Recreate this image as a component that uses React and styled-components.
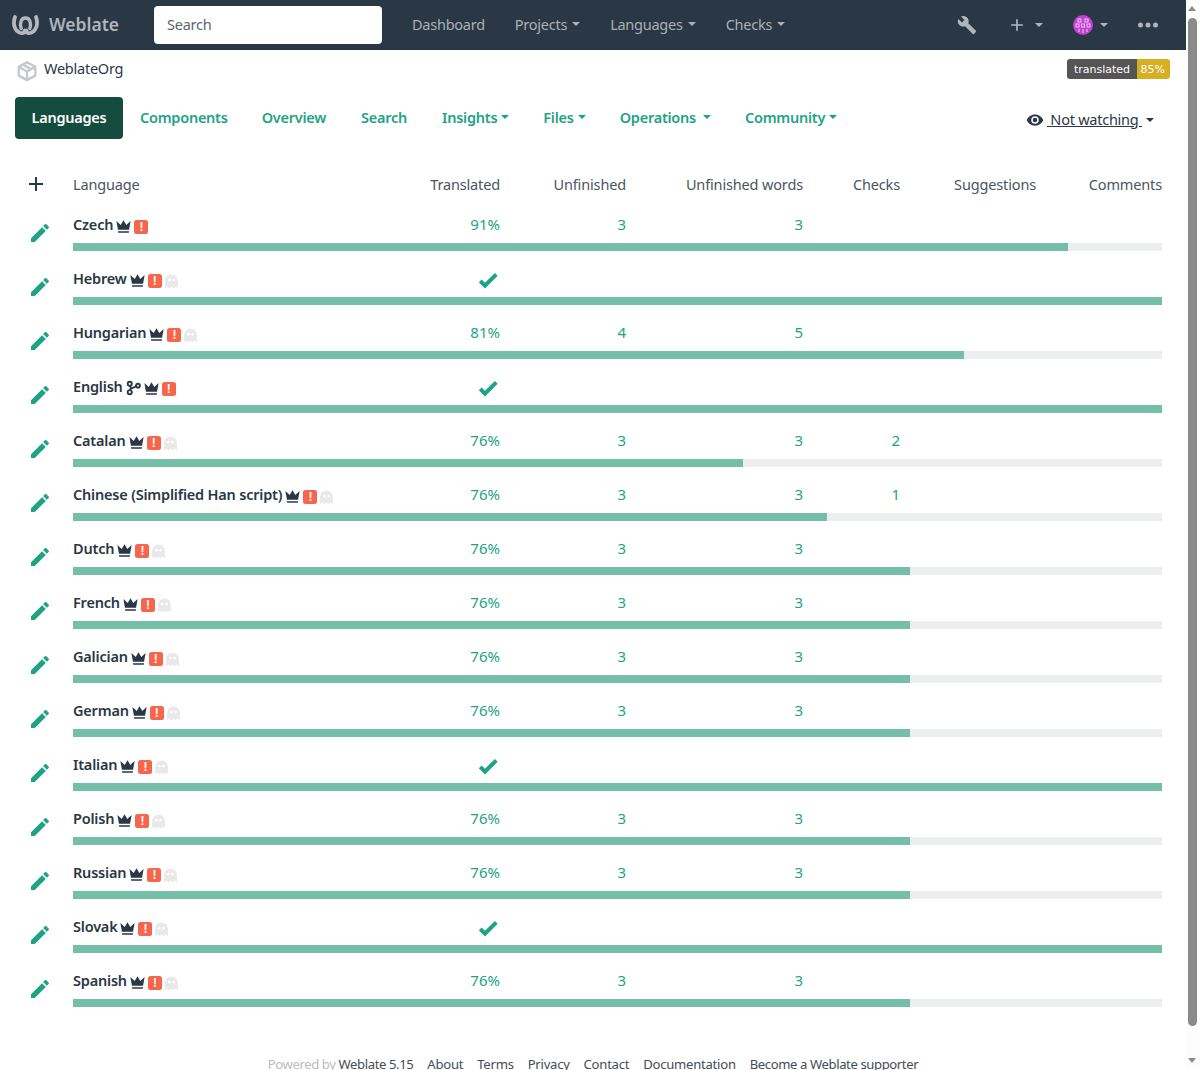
import React from "react";
import styled, { createGlobalStyle } from "styled-components";

const Global = createGlobalStyle`
  html, body { margin: 0; padding: 0; background: #fff; }
  body { font-family: "Noto Sans", "Liberation Sans", sans-serif; color: #2a3744; font-size: 14.5px; letter-spacing: -0.25px; }
  html { overflow: hidden; }
`;

const Page = styled.div`
  width: 1200px;
  height: 1070px;
  overflow: hidden;
  position: relative;
`;
const TopBar = styled.header`
  height: 50px;
  background: #2a3744;
  display: flex;
  align-items: center;
  padding: 0 37px 0 12px;
  color: #b0b6bd;
`;
const Brand = styled.div`
  display: flex;
  align-items: center;
  gap: 10px;
  width: 142px;
  font-size: 17.5px;
  font-weight: 600;
  letter-spacing: 0;
  color: #aeb5bc;
`;
const BrandText = styled.span`
  padding-bottom: 2px;
`;
const SearchBox = styled.div`
  width: 228px;
  height: 38px;
  box-sizing: border-box;
  background: #fff;
  border-radius: 4px;
  padding: 0 0 2px 13px;
  display: flex;
  align-items: center;
  color: #5b6670;
`;
const MainNav = styled.nav`
  display: flex;
  margin-left: 30px;
  gap: 30px;
`;
const NavLink = styled.span`
  display: flex;
  align-items: center;
  gap: 5px;
  color: #aab0b7;
  padding-bottom: 2px;
`;
const Caret = styled.i`
  display: inline-block;
  width: 0;
  height: 0;
  border-left: 4px solid transparent;
  border-right: 4px solid transparent;
  border-top: 4px solid ${(p) => p.$color || "currentColor"};
`;
const TopTools = styled.div`
  margin-left: auto;
  display: flex;
  align-items: center;
  color: #b0b6bd;
`;
const ToolItem = styled.span`
  display: flex;
  align-items: center;
  gap: ${(p) => p.$gap || 0}px;
  margin-left: ${(p) => p.$ml || 0}px;
`;
const Crumb = styled.div`
  height: 47px;
  display: flex;
  align-items: flex-start;
  justify-content: space-between;
  padding: 9px 30px 0 16px;
  box-sizing: border-box;
`;
const OrgName = styled.div`
  display: flex;
  align-items: center;
  gap: 6px;
  line-height: 20px;
  margin-top: -5px;
  svg { margin-top: 6px; }
`;
const Badge = styled.div`
  display: flex;
  height: 20px;
  border-radius: 3px;
  overflow: hidden;
  font-family: "DejaVu Sans", sans-serif;
  font-size: 11px;
  letter-spacing: 0;
  line-height: 21px;
  color: #fff;
`;
const BadgeKey = styled.span`
  background: #555;
  padding: 0 6.5px;
`;
const BadgeVal = styled.span`
  background: #d6af22;
  padding: 0 5px 0 4px;
`;
const Tabs = styled.div`
  display: flex;
  align-items: center;
  height: 42px;
  padding-left: 15px;
  font-weight: 600;
  color: #1fa385;
`;
const ActiveTab = styled.span`
  height: 42px;
  width: 108px;
  box-sizing: border-box;
  padding-bottom: 2px;
  display: flex;
  align-items: center;
  justify-content: center;
  background: #144d3f;
  color: #fff;
  border-radius: 4px;
`;
const Tab = styled.span`
  display: flex;
  align-items: center;
  gap: ${(p) => p.$gap || 4}px;
  margin-left: ${(p) => p.$ml}px;
  padding-bottom: 2px;
`;
const Watch = styled.span`
  margin-left: auto;
  margin-right: 46px;
  margin-top: 3px;
  display: flex;
  align-items: center;
  gap: 5px;
  font-weight: 400;
  color: #2a3744;
`;
const WatchText = styled.span`
  text-decoration: underline;
  white-space: pre;
  margin: 0 -1px 0 -2px;
  padding-bottom: 2px;
`;
const Table = styled.div`
  margin-top: 25px;
  padding-left: 15px;
  width: 1147px;
`;
const Row = styled.div`
  display: grid;
  grid-template-columns: 58px 327px 100px 126px 177px 97px 136px 126px;
  grid-template-rows: 39px 15px;
  height: 54px;
  box-sizing: border-box;
`;
const HeadRow = styled.div`
  display: grid;
  grid-template-columns: 58px 327px 100px 126px 177px 97px 136px 126px;
  height: 40px;
  align-items: center;
  color: #4a5561;
  letter-spacing: -0.15px;
`;
const HeadAction = styled.div`
  display: flex;
  justify-content: center;
  padding-right: 16px;
  color: #2a3744;
`;
const Action = styled.div`
  grid-row: 1 / span 2;
  display: flex;
  align-items: center;
  justify-content: center;
  padding: 4px 8px 0 0;
  color: #1fa385;
`;
const HeadCell = styled.div`
  text-align: ${(p) => (p.$left ? "left" : "right")};
  padding-bottom: 1px;
`;
const Name = styled.div`
  display: flex;
  align-items: center;
  gap: 1px;
  font-weight: 600;
  height: 39px;
  padding-top: 1px;
  box-sizing: border-box;
  letter-spacing: -0.2px;
`;
const Cell = styled.div`
  text-align: right;
  color: #1fa385;
  height: 39px;
  padding-top: 2px;
  line-height: 36px;
  box-sizing: border-box;
  font-size: 15px;
  letter-spacing: 0;
`;
const DoneCell = styled(Cell)`
  display: flex;
  align-items: center;
  justify-content: flex-end;
  padding-top: 5px;
`;
const IconBox = styled.span`
  display: inline-flex;
  margin-top: ${(p) => p.$mt || 4}px;
  margin-left: ${(p) => p.$ml || 0}px;
`;
const Alert = styled.span`
  width: 14px;
  height: 14px;
  border-radius: 2.5px;
  background: #f6664c;
  color: #fff;
  display: inline-flex;
  align-items: center;
  justify-content: center;
  margin-top: 6px;
  font-size: 12px;
  font-weight: 800;
  line-height: 1;
  font-family: "Liberation Sans", sans-serif;
`;
const Track = styled.div`
  grid-column: 2 / span 7;
  height: 8px;
  background: #eceeef;
`;
const Fill = styled.div`
  height: 100%;
  background: #75bfa8;
`;
const Footer = styled.footer`
  display: flex;
  justify-content: center;
  gap: 14px;
  margin-top: 41px;
  padding-right: 14px;
  font-size: 13.1px;
  color: #444e58;
  white-space: nowrap;
`;
const FooterLong = styled.span`
  letter-spacing: -0.4px;
`;
const Muted = styled.span`
  color: #bcbcbc;
`;
const Scroll = styled.div`
  position: absolute;
  top: 0;
  right: 0;
  width: 14px;
  height: 1070px;
  background: #fdfdfd;
`;
const Thumb = styled.div`
  position: absolute;
  left: 2px;
  top: 18px;
  width: 9px;
  height: 1008px;
  border-radius: 5px;
  background: #8a8a8a;
`;
const ArrowUp = styled.i`
  position: absolute;
  left: 2px;
  top: 6px;
  border-left: 4.5px solid transparent;
  border-right: 4.5px solid transparent;
  border-bottom: 5px solid #8a8a8a;
`;
const ArrowDown = styled.i`
  position: absolute;
  left: 2px;
  top: 1058px;
  border-left: 4.5px solid transparent;
  border-right: 4.5px solid transparent;
  border-top: 5px solid #8a8a8a;
`;

const Mdi = ({ d, size = 16, color = "currentColor" }) => (
  <svg width={size} height={size} viewBox="0 0 24 24" fill={color}><path d={d} /></svg>
);
const PENCIL = "M20.71,7.04C21.1,6.65 21.1,6 20.71,5.63L18.37,3.29C18,2.9 17.35,2.9 16.96,3.29L15.12,5.12L18.87,8.87M3,17.25V21H6.75L17.81,9.93L14.06,6.18L3,17.25Z";
const CROWN = "M5 16L3 5L8.5 10L12 4L15.5 10L21 5L19 16H5M19 19C19 19.6 18.6 20 18 20H6C5.4 20 5 19.6 5 19V18H19V19Z";
const CHECK = "M9,20.42L2.79,14.21L5.62,11.38L9,14.77L18.88,4.88L21.71,7.71L9,20.42Z";
const GHOST = "M12,2A9,9 0 0,0 3,11V22L6,19L9,22L12,19L15,22L18,19L21,22V11A9,9 0 0,0 12,2M9,8A2,2 0 0,1 11,10A2,2 0 0,1 9,12A2,2 0 0,1 7,10A2,2 0 0,1 9,8M15,8A2,2 0 0,1 17,10A2,2 0 0,1 15,12A2,2 0 0,1 13,10A2,2 0 0,1 15,8Z";
const EYE = "M12,9A3,3 0 0,0 9,12A3,3 0 0,0 12,15A3,3 0 0,0 15,12A3,3 0 0,0 12,9M12,17A5,5 0 0,1 7,12A5,5 0 0,1 12,7A5,5 0 0,1 17,12A5,5 0 0,1 12,17M12,4.5C7,4.5 2.73,7.61 1,12C2.73,16.39 7,19.5 12,19.5C17,19.5 21.27,16.39 23,12C21.27,7.61 17,4.5 12,4.5Z";
const WRENCH = "M22.7,19L13.6,9.9C14.5,7.6 14,4.9 12.1,3C10.1,1 7.1,0.6 4.7,1.7L9,6L6,9L1.6,4.7C0.4,7.1 0.9,10.1 2.9,12.1C4.8,14 7.5,14.5 9.8,13.6L18.9,22.7C19.3,23.1 19.9,23.1 20.3,22.7L22.6,20.4C23.1,20 23.1,19.3 22.7,19Z";
const PLUS = "M19,13H13V19H11V13H5V11H11V5H13V11H19V13Z";
const DOTS = "M16,12A2,2 0 0,1 18,10A2,2 0 0,1 20,12A2,2 0 0,1 18,14A2,2 0 0,1 16,12M10,12A2,2 0 0,1 12,10A2,2 0 0,1 14,12A2,2 0 0,1 12,14A2,2 0 0,1 10,12M4,12A2,2 0 0,1 6,10A2,2 0 0,1 8,12A2,2 0 0,1 6,14A2,2 0 0,1 4,12Z";

const Logo = () => (
  <svg width="27" height="20" viewBox="0 0 27 20" fill="none" stroke="#b3b8bd" strokeLinecap="round">
    <path d="M3 2C0.8 8 2 15.5 8 17.7C11 18.7 13 17.8 14.5 15.5" strokeWidth="3.8" />
    <path d="M24 2C26.2 8 25 15.5 19 17.7C16 18.7 14 17.8 12.5 15.5" strokeWidth="3.8" />
    <path d="M9.2 13.5C7.5 8.5 9 3 13.5 3C18 3 19.5 8.5 17.8 13.5" strokeWidth="3.4" />
  </svg>
);
const Box = () => (
  <svg width="22" height="22" viewBox="0 0 24 24" fill="none" stroke="#c6c8ca" strokeWidth="2.6" strokeLinejoin="round">
    <path d="M12 2.5L21 7.5V17L12 22L3 17V7.5Z" />
    <path d="M3 7.5L12 12.5L21 7.5M12 12.5V22M7.5 5L16.5 10" />
  </svg>
);
const Branch = () => (
  <svg width="15" height="16" viewBox="0 0 16 16" fill="none" stroke="#2a3744" strokeWidth="2">
    <circle cx="4" cy="3.5" r="2.2" />
    <circle cx="4" cy="12.5" r="2.2" />
    <circle cx="12.8" cy="5.5" r="2" />
    <path d="M4.5 5.7C5.5 8 5.5 8.5 4.5 10.3M5.5 8.2C7.5 8.2 9 7 10.8 6" />
  </svg>
);
const Avatar = () => (
  <svg width="20" height="20" viewBox="0 0 20 20">
    <circle cx="10" cy="10" r="10" fill="#c043d4" />
    <g fill="none" stroke="#eec2f4" strokeWidth="1">
      <rect x="5" y="4" width="3" height="3" />
      <rect x="12" y="4" width="3" height="3" />
      <rect x="3" y="9" width="3" height="3" />
      <rect x="8.5" y="9" width="3" height="3" />
      <rect x="14" y="9" width="3" height="3" />
      <path d="M6 14v3M10 14v4M14 14v3" />
    </g>
  </svg>
);

const W = 1089;
const rows = [
  { n: "Czech", t: "91%", u: 3, w: 3, f: 995 },
  { n: "Hebrew", f: W, g: 1 },
  { n: "Hungarian", t: "81%", u: 4, w: 5, f: 891, g: 1 },
  { n: "English", f: W, b: 1 },
  { n: "Catalan", t: "76%", u: 3, w: 3, c: 2, f: 670, g: 1 },
  { n: "Chinese (Simplified Han script)", t: "76%", u: 3, w: 3, c: 1, f: 754, g: 1 },
  { n: "Dutch", t: "76%", u: 3, w: 3, f: 837, g: 1 },
  { n: "French", t: "76%", u: 3, w: 3, f: 837, g: 1 },
  { n: "Galician", t: "76%", u: 3, w: 3, f: 837, g: 1 },
  { n: "German", t: "76%", u: 3, w: 3, f: 837, g: 1 },
  { n: "Italian", f: W, g: 1 },
  { n: "Polish", t: "76%", u: 3, w: 3, f: 837, g: 1 },
  { n: "Russian", t: "76%", u: 3, w: 3, f: 837, g: 1 },
  { n: "Slovak", f: W, g: 1 },
  { n: "Spanish", t: "76%", u: 3, w: 3, f: 837, g: 1 },
];

export default function App() {
  return (
    <Page>
      <Global />
      <TopBar>
        <Brand><Logo /><BrandText>Weblate</BrandText></Brand>
        <SearchBox>Search</SearchBox>
        <MainNav>
          <NavLink>Dashboard</NavLink>
          <NavLink>Projects<Caret /></NavLink>
          <NavLink>Languages<Caret /></NavLink>
          <NavLink>Checks<Caret /></NavLink>
        </MainNav>
        <TopTools>
          <ToolItem><Mdi d={WRENCH} size={20} /></ToolItem>
          <ToolItem $ml={30} $gap={8}><Mdi d={PLUS} size={20} /><Caret /></ToolItem>
          <ToolItem $ml={30} $gap={7}><Avatar /><Caret /></ToolItem>
          <ToolItem $ml={25}><Mdi d={DOTS} size={30} /></ToolItem>
        </TopTools>
      </TopBar>
      <Crumb>
        <OrgName><Box />WeblateOrg</OrgName>
        <Badge><BadgeKey>translated</BadgeKey><BadgeVal>85%</BadgeVal></Badge>
      </Crumb>
      <Tabs>
        <ActiveTab>Languages</ActiveTab>
        <Tab $ml={17}>Components</Tab>
        <Tab $ml={34}>Overview</Tab>
        <Tab $ml={35}>Search</Tab>
        <Tab $ml={35}>Insights<Caret /></Tab>
        <Tab $ml={34}>Files<Caret /></Tab>
        <Tab $ml={34} $gap={7}>Operations<Caret /></Tab>
        <Tab $ml={34}>Community<Caret /></Tab>
        <Watch><Mdi d={EYE} size={18} /><WatchText> Not watching </WatchText><Caret /></Watch>
      </Tabs>
      <Table>
        <HeadRow>
          <HeadAction><Mdi d={PLUS} size={24} /></HeadAction>
          <HeadCell $left>Language</HeadCell>
          <HeadCell>Translated</HeadCell>
          <HeadCell>Unfinished</HeadCell>
          <HeadCell>Unfinished words</HeadCell>
          <HeadCell>Checks</HeadCell>
          <HeadCell>Suggestions</HeadCell>
          <HeadCell>Comments</HeadCell>
        </HeadRow>
        {rows.map((r) => (
          <Row key={r.n}>
            <Action><Mdi d={PENCIL} size={24} /></Action>
            <Name>
              {r.n}
              {r.b && <IconBox $ml={2}><Branch /></IconBox>}
              <IconBox><Mdi d={CROWN} size={19} color="#2a3744" /></IconBox>
              <Alert>!</Alert>
              {r.g && <IconBox $mt={6}><Mdi d={GHOST} size={17} color="#e9e9e9" /></IconBox>}
            </Name>
            {r.t ? <Cell>{r.t}</Cell> : <DoneCell><Mdi d={CHECK} size={24} /></DoneCell>}
            <Cell>{r.u}</Cell>
            <Cell>{r.w}</Cell>
            <Cell>{r.c}</Cell>
            <Cell />
            <Cell />
            <Track><Fill style={{ width: r.f }} /></Track>
          </Row>
        ))}
      </Table>
      <Footer>
        <FooterLong><Muted>Powered by</Muted> Weblate 5.15</FooterLong>
        <span>About</span>
        <span>Terms</span>
        <span>Privacy</span>
        <span>Contact</span>
        <span>Documentation</span>
        <FooterLong>Become a Weblate supporter</FooterLong>
      </Footer>
      <Scroll>
        <ArrowUp />
        <Thumb />
        <ArrowDown />
      </Scroll>
    </Page>
  );
}
